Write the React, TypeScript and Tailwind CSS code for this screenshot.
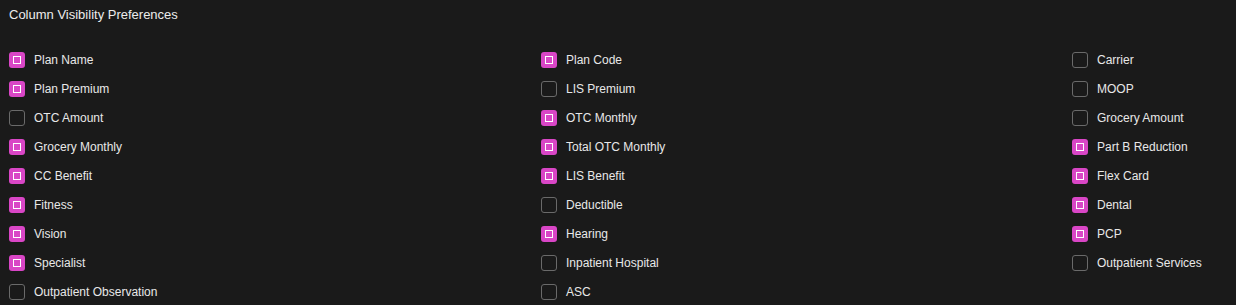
import { useState } from 'react'

interface ColumnPref {
  key: string
  label: string
  visible: boolean
}

const initialColumns: ColumnPref[] = [
  { key: 'planName', label: 'Plan Name', visible: true },
  { key: 'planCode', label: 'Plan Code', visible: true },
  { key: 'carrier', label: 'Carrier', visible: false },
  { key: 'planPremium', label: 'Plan Premium', visible: true },
  { key: 'lisPremium', label: 'LIS Premium', visible: false },
  { key: 'moop', label: 'MOOP', visible: false },
  { key: 'otcAmount', label: 'OTC Amount', visible: false },
  { key: 'otcMonthly', label: 'OTC Monthly', visible: true },
  { key: 'groceryAmount', label: 'Grocery Amount', visible: false },
  { key: 'groceryMonthly', label: 'Grocery Monthly', visible: true },
  { key: 'totalOtcMonthly', label: 'Total OTC Monthly', visible: true },
  { key: 'partBReduction', label: 'Part B Reduction', visible: true },
  { key: 'ccBenefit', label: 'CC Benefit', visible: true },
  { key: 'lisBenefit', label: 'LIS Benefit', visible: true },
  { key: 'flexCard', label: 'Flex Card', visible: true },
  { key: 'fitness', label: 'Fitness', visible: true },
  { key: 'deductible', label: 'Deductible', visible: false },
  { key: 'dental', label: 'Dental', visible: true },
  { key: 'vision', label: 'Vision', visible: true },
  { key: 'hearing', label: 'Hearing', visible: true },
  { key: 'pcp', label: 'PCP', visible: true },
  { key: 'specialist', label: 'Specialist', visible: true },
  { key: 'inpatientHospital', label: 'Inpatient Hospital', visible: false },
  { key: 'outpatientServices', label: 'Outpatient Services', visible: false },
  { key: 'outpatientObservation', label: 'Outpatient Observation', visible: false },
  { key: 'asc', label: 'ASC', visible: false },
]

function ColumnCheckbox({ pref, onToggle }: { pref: ColumnPref; onToggle: () => void }) {
  return (
    <label className="flex h-[29px] cursor-pointer items-center gap-[9px]">
      <button
        type="button"
        role="checkbox"
        aria-checked={pref.visible}
        onClick={onToggle}
        className={
          pref.visible
            ? 'flex size-4 items-center justify-center rounded-[3px] bg-[#d946c6]'
            : 'flex size-4 items-center justify-center rounded-[3px] border border-[#6a6a6a] bg-transparent'
        }
      >
        {pref.visible && <span className="block size-[8px] border-[1.5px] border-white" />}
      </button>
      <span className="text-[12px] leading-4 text-[#e8e8e8]">{pref.label}</span>
    </label>
  )
}

export default function App() {
  const [columns, setColumns] = useState(initialColumns)

  function toggle(key: string) {
    setColumns(prev => prev.map(c => (c.key === key ? { ...c, visible: !c.visible } : c)))
  }

  return (
    <div className="h-[305px] w-full overflow-hidden bg-[#1a1a1a] pl-[9px] pt-[7px] font-['Liberation_Sans',Arial,sans-serif]">
      <h2 className="text-[13px] leading-4 text-[#ececec]">Column Visibility Preferences</h2>
      <div className="mt-[22px] grid grid-cols-[532px_531px_1fr]">
        {columns.map(col => (
          <ColumnCheckbox key={col.key} pref={col} onToggle={() => toggle(col.key)} />
        ))}
      </div>
    </div>
  )
}
